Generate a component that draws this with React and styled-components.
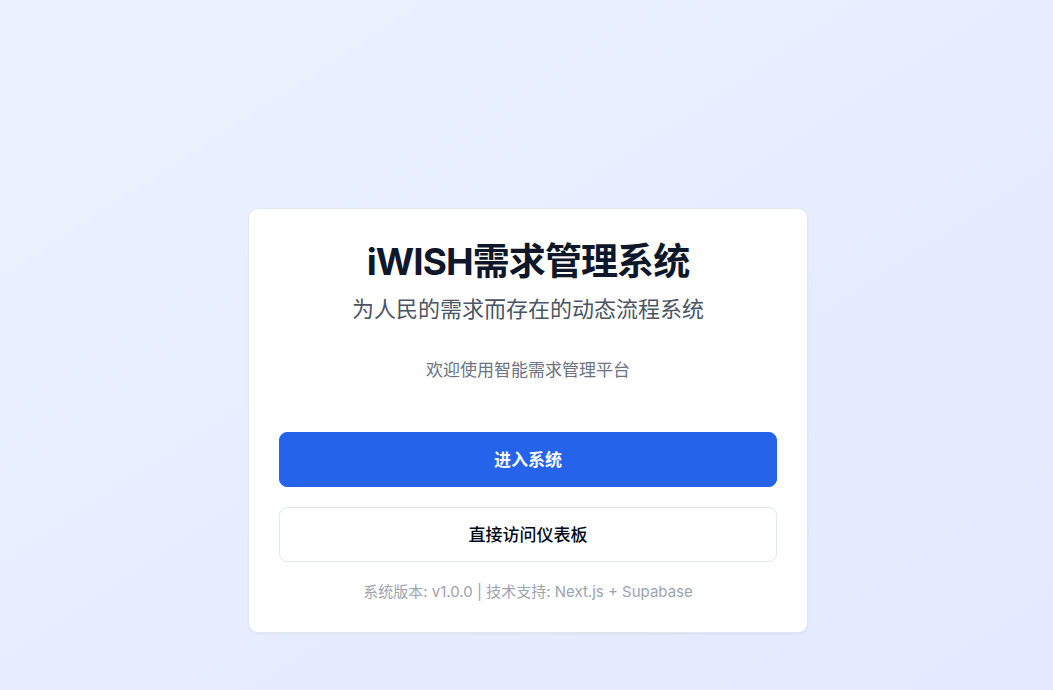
import React from "react";
import styled, { createGlobalStyle, css } from "styled-components";

const GlobalStyle = createGlobalStyle`
  *, *::before, *::after { box-sizing: border-box; }
  body {
    margin: 0;
    font-family: Inter, "Noto Sans CJK SC", sans-serif;
  }
`;

const Page = styled.main`
  min-height: 100vh;
  display: flex;
  align-items: center;
  justify-content: center;
  padding: 208px 20px 58px 23px;
  background: linear-gradient(to bottom right, #ebf2ff, #e3e9ff);
`;

const Card = styled.section`
  width: 100%;
  max-width: 560px;
  padding: 30px;
  border: 1px solid #e2e8f0;
  border-radius: 10px;
  background: #fff;
  box-shadow: 0 1px 2px rgba(0, 0, 0, 0.05);
  text-align: center;
`;

const Header = styled.header`
  display: flex;
  flex-direction: column;
  gap: 8px;
`;

const Title = styled.h1`
  margin: 0;
  font-size: 37px;
  line-height: 46px;
  font-weight: 700;
  letter-spacing: -0.025em;
  color: #0f172a;
`;

const Subtitle = styled.p`
  margin: 0;
  font-size: 22px;
  line-height: 32px;
  color: #4b5563;
`;

const Welcome = styled.p`
  margin: 32px 0 48px;
  font-size: 17px;
  line-height: 27px;
  color: #6b7280;
`;

const Actions = styled.div`
  display: grid;
  gap: 20px;
`;

const Button = styled.button`
  height: 55px;
  padding: 0 40px 2px;
  border: 1px solid #e2e8f0;
  border-radius: 8px;
  background: #fff;
  color: #020817;
  font-family: inherit;
  font-size: 17px;
  font-weight: 500;
  cursor: pointer;
  ${(p) =>
    p.$primary &&
    css`
      border-color: #2563eb;
      background: #2563eb;
      color: #f8fafc;
      font-weight: 600;
    `}
`;

const Version = styled.p`
  margin: 20px 0 0;
  font-size: 15px;
  line-height: 20px;
  color: #9ca3af;
`;

export default function App() {
  return (
    <>
      <GlobalStyle />
      <Page>
        <Card>
          <Header>
            <Title>iWISH需求管理系统</Title>
            <Subtitle>为人民的需求而存在的动态流程系统</Subtitle>
          </Header>
          <Welcome>欢迎使用智能需求管理平台</Welcome>
          <Actions>
            <Button type="button" $primary>进入系统</Button>
            <Button type="button">直接访问仪表板</Button>
          </Actions>
          <Version>系统版本: v1.0.0 | 技术支持: Next.js + Supabase</Version>
        </Card>
      </Page>
    </>
  );
}
